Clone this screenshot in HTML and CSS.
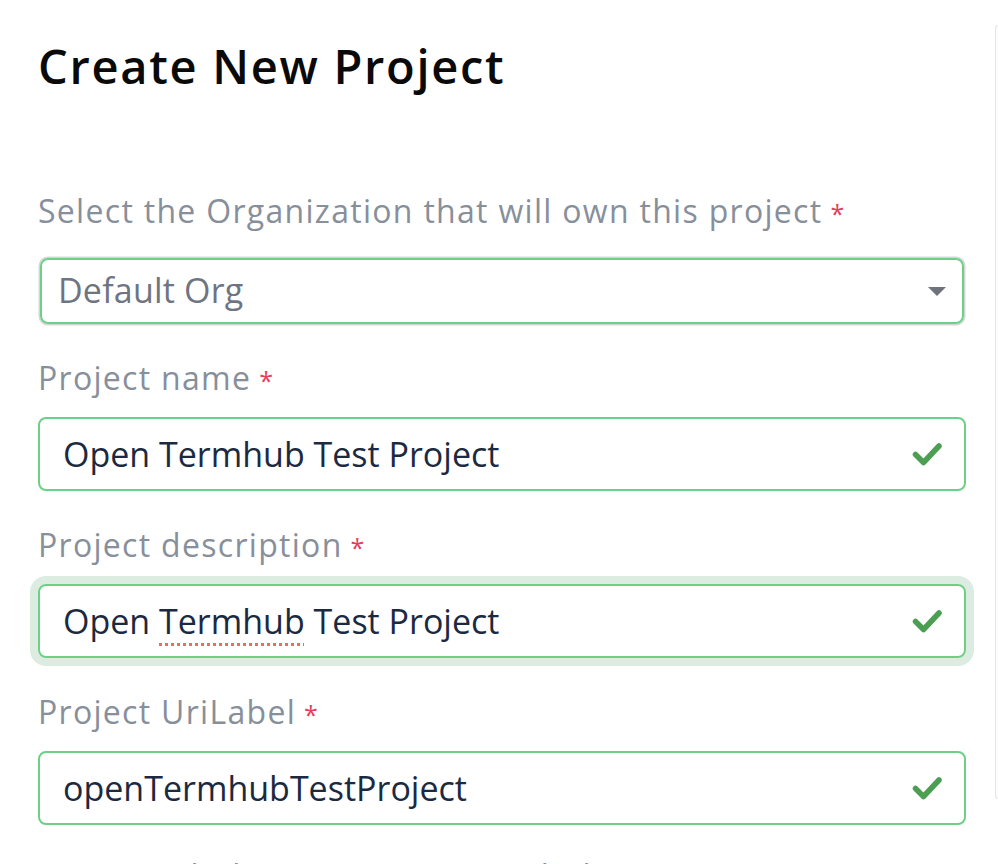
FILE: index.html
```html
<!DOCTYPE html>
<html lang="en">
<head>
<meta charset="utf-8">
<title>Create New Project</title>
<link rel="stylesheet" href="styles.css">
</head>
<body>
<div class="page">
  <main class="main">
    <h1 class="title">Create New Project</h1>

    <div class="group group-first">
      <label class="label label-select">Select the Organization that will own this project<span class="req">*</span></label>
      <div class="select">
        <span class="select-value">Default Org</span>
        <span class="caret"></span>
      </div>
    </div>

    <div class="group">
      <label class="label">Project name<span class="req">*</span></label>
      <div class="field">
        <span class="field-text">Open Termhub Test Project</span>
        <svg class="check" width="32" height="26" viewBox="0 0 32 26"><path d="M4.5 13.5 L12.5 21.5 L28 5" fill="none" stroke="#4c9e52" stroke-width="5.5" stroke-linecap="round" stroke-linejoin="round"/></svg>
      </div>
    </div>

    <div class="group">
      <label class="label">Project description<span class="req">*</span></label>
      <div class="field field-focus">
        <span class="field-text">Open <span class="spell">Termhub</span> Test Project</span>
        <svg class="check" width="32" height="26" viewBox="0 0 32 26"><path d="M4.5 13.5 L12.5 21.5 L28 5" fill="none" stroke="#4c9e52" stroke-width="5.5" stroke-linecap="round" stroke-linejoin="round"/></svg>
      </div>
    </div>

    <div class="group">
      <label class="label">Project UriLabel<span class="req">*</span></label>
      <div class="field">
        <span class="field-text">openTermhubTestProject</span>
        <svg class="check" width="32" height="26" viewBox="0 0 32 26"><path d="M4.5 13.5 L12.5 21.5 L28 5" fill="none" stroke="#4c9e52" stroke-width="5.5" stroke-linecap="round" stroke-linejoin="round"/></svg>
      </div>
    </div>

    <p class="hint">URI: termhub/n3c01/openTermhub</p>
  </main>
  <aside class="side"></aside>
</div>
</body>
</html>
```
FILE: styles.css
```css
html, body {
  margin: 0;
  padding: 0;
  background: #ffffff;
  height: 864px;
  overflow: hidden;
}

body {
  font-family: "Open Sans", "Noto Sans", sans-serif;
}

.page {
  display: flex;
  align-items: flex-start;
}

.main {
  width: 995px;
  flex: none;
  box-sizing: border-box;
  padding: 38px 29px 0 38px;
}

.title {
  margin: 0 0 97px 0;
  font-size: 47px;
  line-height: 56px;
  font-weight: 600;
  color: #0a0a0a;
  letter-spacing: 1.7px;
}

.group {
  margin-top: 33.5px;
}

.group-first {
  margin-top: 0;
}

.label {
  display: block;
  height: 40px;
  font-size: 32px;
  line-height: 40px;
  color: #878f9b;
  letter-spacing: 1.3px;
  margin-bottom: 19.5px;
}

.label-select {
  margin-bottom: 27px;
}

.req {
  color: #e53e5c;
  font-size: 25px;
  line-height: 1;
  margin-left: 8px;
  letter-spacing: 0;
}

.select {
  margin: 0 2px;
  height: 66px;
  box-sizing: border-box;
  border: 2px solid #6fcf86;
  border-radius: 8px;
  box-shadow: 0 0 0 1.5px #d3d5d9;
  display: flex;
  align-items: center;
  justify-content: space-between;
  padding: 0 16px 2px 16px;
}

.select-value {
  font-size: 34px;
  color: #6f7482;
  letter-spacing: 0.2px;
}

.caret {
  width: 0;
  height: 0;
  border-left: 9px solid transparent;
  border-right: 9px solid transparent;
  border-top: 9px solid #6f717d;
  margin-top: 2px;
}

.field {
  height: 74px;
  box-sizing: border-box;
  border: 2px solid #6fcf86;
  border-radius: 8px;
  display: flex;
  align-items: center;
  justify-content: space-between;
  padding: 0 21px 1px 23px;
}

.field-focus {
  box-shadow: 0 0 0 8px #dcece0;
}

.field-text {
  font-size: 34px;
  color: #1b2a41;
}

.check {
  display: block;
  margin-top: 1px;
}

.spell {
  text-decoration: underline dotted #ee6b5f;
  text-decoration-thickness: 3px;
  text-underline-offset: 9px;
}

.hint {
  margin: 31px 0 0 0;
  font-size: 32px;
  line-height: 40px;
  color: #878f9b;
  letter-spacing: 1.3px;
  white-space: nowrap;
}

.side {
  flex: 1;
  margin-top: 25px;
  height: 772px;
  border-left: 1px solid #e6e6e6;
  border-top: 1px solid #e6e6e6;
  border-bottom: 1px solid #e6e6e6;
  border-radius: 8px 0 0 8px;
  background: #fcfcfc;
}
```
